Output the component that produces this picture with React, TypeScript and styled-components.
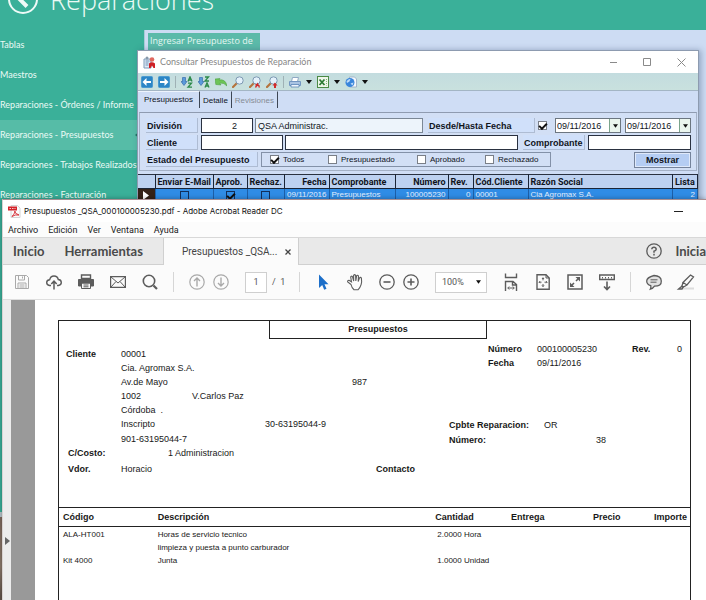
import React from "react";
import styled, { createGlobalStyle, css } from "styled-components";

const ui = `Lato, "Open Sans", sans-serif`;
const classic = `"Liberation Sans", Arial, sans-serif`;

const GlobalStyle = createGlobalStyle`
  * { box-sizing: border-box; }
  html, body, #root { height: 100%; }
  body { margin: 0; overflow: hidden; font-family: ${classic}; }
  button, input, select { font: inherit; color: inherit; margin: 0; padding: 0; border-radius: 0; }
  button { border: 0; background: none; }
  svg { display: block; }
`;

/* ---------- desktop ---------- */

const Desktop = styled.div`
  position: relative;
  display: flex;
  flex-direction: column;
  height: 100vh;
  overflow: hidden;
  background: #3ab099;
`;

const Shell = styled.div`
  flex: 1;
  min-height: 0;
  overflow: hidden;
  display: flex;
  flex-direction: column;
  background: #3ab099;
  color: #eafaf5;
  font-family: ${ui};
`;

const Backdrop = styled.div`
  flex: none;
  height: 88px;
  border-top: 5px solid #b9c6cc;
  background: linear-gradient(#7f6a5e, #8c7a6c 60%, #5f5148);
`;

const ShellHeader = styled.header`
  flex: none;
  display: flex;
  align-items: center;
  gap: 11px;
  height: 60px;
  margin-top: -30px;
  padding-left: 7px;
`;

const ShellTitle = styled.h1`
  margin: 0;
  font: 300 27px/36px "Open Sans", sans-serif;
`;

const ShellBody = styled.div`
  flex: 1;
  display: flex;
`;

const Nav = styled.nav`
  flex: none;
  width: 144px;
  display: flex;
  flex-direction: column;
`;

const NavLink = styled.a<{ $active?: boolean }>`
  display: flex;
  align-items: center;
  justify-content: space-between;
  height: 30px;
  color: #eafaf5;
  font-size: 9px;
  line-height: 12px;
  white-space: nowrap;
  text-decoration: none;
  background: ${(p) => (p.$active ? "#56bca7" : "transparent")};
`;

const NavMark = styled.svg`
  margin-right: 5px;
`;

const Content = styled.main`
  flex: 1;
  padding: 3px;
  border-left: 1px solid #a9cbd8;
  background: #cddcf3;
`;

const Tile = styled.button`
  width: 112px;
  height: 40px;
  padding: 1px 0 0 2px;
  background: #5bbaa9;
  color: #e6f7f3;
  font: 9px/13px "Open Sans", sans-serif;
  text-align: left;
  display: flex;
`;

/* ---------- query window ---------- */

const QueryWindow = styled.section`
  position: absolute;
  top: 50px;
  left: 137px;
  right: 7px;
  height: 160px;
  border: 1px solid #8d9bb0;
  background: #cfddf5;
  color: #10141c;
  font-size: 8px;
  box-shadow: 2px 0 6px rgba(40, 60, 100, 0.35);
  display: flex;
  flex-direction: column;
  overflow: hidden;
`;

const QueryTitleBar = styled.div`
  flex: none;
  display: flex;
  align-items: center;
  gap: 4px;
  height: 22px;
  padding-left: 5px;
  background: #fff;
  color: #868686;
  font: 9px/12px ${ui};
`;

const TitleText = styled.span`
  flex: 1;
  white-space: nowrap;
`;

const CaptionButtons = styled.div`
  display: flex;
`;

const CaptionButton = styled.button`
  width: 34px;
  height: 20px;
  display: grid;
  place-items: center;
  color: #8a8a8a;
`;

const QueryToolbar = styled.div`
  flex: none;
  display: flex;
  align-items: center;
  gap: 5px;
  height: 18px;
  padding-left: 3px;
  background: linear-gradient(#c3dcdf, #c9e1de);
  border-bottom: 1px solid #a3b5c4;
`;

const IconButton = styled.button`
  flex: none;
  display: grid;
  place-items: center;
`;

const QuerySeparator = styled.span`
  width: 1px;
  height: 12px;
  background: #9fb1b5;
`;

const QueryTabs = styled.div`
  flex: none;
  display: flex;
  align-items: stretch;
  height: 17px;
`;

const QueryTab = styled.button<{ $active?: boolean; $muted?: boolean }>`
  padding: ${(p) => (p.$active ? "0 6px" : "2px 3px 0 3px")};
  border-right: 1px solid #3d4654;
  color: ${(p) => (p.$muted ? "#868c94" : "#10141c")};
  font-size: 8px;
  line-height: 12px;
  border-top: 1px solid ${(p) => (p.$active ? "#eef4fd" : "#cfddf5")};
`;

const Filters = styled.form`
  flex: none;
  display: flex;
  flex-direction: column;
  gap: 2px;
  margin: 4px 1px 3px;
  padding: 5px 5px 3px 6px;
  border: 1px solid #a4b1c6;
  border-top-color: #8f9bb0;
  background: #d2dff5;
`;

const FilterRow = styled.div`
  display: flex;
  align-items: center;
  height: 15px;
`;

const FieldLabel = styled.label<{ $width: number; $before?: number }>`
  flex: none;
  width: ${(p) => p.$width}px;
  height: 15px;
  margin: 0 3px 0 ${(p) => p.$before ?? 0}px;
  padding: 2px 0 0 1px;
  border: solid #aebcd3;
  border-width: 0 1px 1px 0;
  background: #d0e0fa;
  font: bold 9px/12px ${classic};
  white-space: nowrap;
`;

const TextBox = styled.input<{ $width?: number; $readonly?: boolean; $before?: number }>`
  ${(p) => (p.$width ? css`flex: none; width: ${p.$width}px;` : css`flex: 1; width: 0; min-width: 0;`)}
  height: 15px;
  margin-left: ${(p) => p.$before ?? 0}px;
  padding: 0 2px;
  border: 1px solid ${(p) => (p.$readonly ? "#7b8795" : "#2a3140")};
  background: ${(p) => (p.$readonly ? "#edf4fb" : "#fff")};
  font-size: 9px;
`;

const NumberBox = styled(TextBox)`
  padding-right: 15px;
  text-align: right;
`;

const Check = styled.input.attrs({ type: "checkbox" })<{ $flat?: boolean; $after?: number }>`
  appearance: none;
  flex: none;
  display: grid;
  place-items: center;
  width: 9px;
  height: 9px;
  border: 1px solid ${(p) => (p.$flat ? "#12305c" : "#7a7f88")};
  background: ${(p) => (p.$flat ? "transparent" : "#fff")};
  && { margin-right: ${(p) => p.$after ?? 0}px; }
  &:checked::before {
    content: "";
    width: 6px;
    height: 3px;
    border: solid #111;
    border-width: 0 0 2px 2px;
    transform: rotate(-45deg);
  }
`;

const DateBox = styled.div`
  flex: none;
  display: flex;
  width: 66px;
  height: 15px;
  margin-left: 4px;
  border: 1px solid #6c7680;
  background: #fff;
`;

const DateInput = styled.input`
  flex: 1;
  width: 0;
  padding-left: 1px;
  border: 0;
  background: none;
  font-size: 9px;
`;

const DateDrop = styled.button`
  width: 11px;
  display: grid;
  place-items: center;
  border-left: 1px solid #7ba58c;
  background: #eaf5ee;
`;

const Spacer = styled.span`
  flex: 1;
`;

const StateGroup = styled.div`
  display: grid;
  grid-template-columns: 58px 89px 68px 58px;
  align-items: center;
  height: 15px;
  padding-left: 8px;
  width: 290px;
  border: 1px solid #8391a8;
`;

const StateOption = styled.label`
  display: flex;
  align-items: center;
  gap: 4px;
  font-size: 8px;
  white-space: nowrap;
`;

const ShowButton = styled.button`
  width: 57px;
  height: 16px;
  border: 1px solid #75839b;
  background: #b5cdf3;
  box-shadow: 0 0 0 1px #dfe9fa inset;
  font: bold 9px/12px ${classic};
`;

const Grid = styled.table`
  flex: none;
  width: 100%;
  table-layout: fixed;
  border-collapse: collapse;
  border-top: 1px solid #2a3140;
  white-space: nowrap;
`;

const GridHead = styled.th<{ $width?: number; $right?: boolean }>`
  width: ${(p) => (p.$width ? `${p.$width}px` : "auto")};
  height: 14px;
  padding: 0 2px;
  border-right: 1px solid #1a2436;
  border-bottom: 1px solid #1a2436;
  background: #bdd1f0;
  font: bold 9px/12px Roboto, sans-serif;
  text-align: ${(p) => (p.$right ? "right" : "left")};
  overflow: hidden;
`;

const GridCell = styled.td<{ $kind?: "mark" | "right" | "check" }>`
  height: 13px;
  padding: ${(p) => (p.$kind === "mark" ? "0 5px" : "0 2px")};
  border-right: 1px solid #1d5fa8;
  background: ${(p) => (p.$kind === "mark" ? "#352218" : "#2f8ce6")};
  color: #e3f0ff;
  font-size: 8px;
  line-height: 12px;
  text-align: ${(p) => (p.$kind === "right" ? "right" : "left")};
  overflow: hidden;
  ${(p) => p.$kind === "check" && css`&& > input { margin: 0 auto; }`}
`;

/* ---------- reader window ---------- */

const Reader = styled.section`
  position: absolute;
  top: 199px;
  left: 2px;
  right: 0;
  bottom: 0;
  display: flex;
  flex-direction: column;
  border-top: 1px solid #a88f92;
  border-left: 1px solid #d9d3d2;
  background: #fff;
  color: #222;
  box-shadow: 0 0 5px rgba(0, 0, 0, 0.35);
  overflow: hidden;
`;

const ReaderTitleBar = styled.div`
  flex: none;
  display: flex;
  align-items: center;
  gap: 3px;
  height: 22px;
  padding: 0 11px 0 5px;
  font: 8px/12px Inter, sans-serif;
  color: #111;
`;

const MenuBar = styled.nav`
  flex: none;
  display: flex;
  align-items: center;
  gap: 10px;
  height: 15px;
  padding-left: 5px;
  background: #fcfcfc;
`;

const MenuItem = styled.button`
  font: 9px/12px Roboto, sans-serif;
  color: #1a1a1a;
`;

const TabStrip = styled.div`
  flex: none;
  display: flex;
  align-items: stretch;
  height: 28px;
  border-top: 1px solid #d8d8d8;
  background: #e9e9e9;
  overflow: hidden;
`;

const HomeTabs = styled.div`
  flex: none;
  display: flex;
  gap: 20px;
  padding: 0 20px 0 10px;
  border-right: 1px solid #d0d0d0;
  border-bottom: 1px solid #d0d0d0;
`;

const HomeTab = styled.button`
  font: bold 13px/16px ${ui};
  color: #4a4a4a;
`;

const FileTab = styled.div`
  flex: none;
  display: flex;
  align-items: center;
  gap: 8px;
  padding: 0 7px 0 18px;
  border-right: 1px solid #cfcfcf;
  background: #fbfbfb;
  color: #444;
  font: 10px/14px Roboto, sans-serif;
`;

const TabRest = styled.div`
  flex: 1;
  display: flex;
  align-items: center;
  justify-content: flex-end;
  gap: 13px;
  border-bottom: 1px solid #d0d0d0;
`;

const ReaderToolbar = styled.div`
  flex: none;
  display: flex;
  align-items: center;
  gap: 16px;
  height: 35px;
  padding-left: 11px;
  border-bottom: 1px solid #dedede;
  background: #fbfbfb;
  overflow: hidden;
`;

const Pair = styled.div`
  flex: none;
  display: flex;
  gap: 8px;
`;

const ToolButton = styled.button<{ $light?: boolean }>`
  flex: none;
  width: 16px;
  height: 18px;
  display: grid;
  place-items: center;
  color: ${(p) => (p.$light ? "#a9a9a9" : "#5c5c5c")};
`;

const ToolSeparator = styled.span`
  flex: none;
  width: 1px;
  height: 20px;
  margin: 0 -1px;
  background: #d6d6d6;
`;

const Pager = styled.label`
  flex: none;
  display: flex;
  align-items: center;
  gap: 5px;
  width: 39px;
  color: #555;
  font: 9px/12px Roboto, sans-serif;
  white-space: nowrap;
`;

const PageInput = styled.input`
  width: 22px;
  height: 21px;
  border: 1px solid #cfcfcf;
  background: #fff;
  text-align: center;
`;

const ZoomBox = styled.div`
  flex: none;
  display: grid;
  align-items: center;
  width: 52px;
  height: 21px;
  border: 1px solid #cfcfcf;
  background: #fff;
  & > * { grid-area: 1 / 1; }
  & > svg { justify-self: end; margin-right: 5px; pointer-events: none; }
`;

const ZoomSelect = styled.select`
  appearance: none;
  width: 100%;
  height: 100%;
  padding-left: 6px;
  border: 0;
  background: none;
  color: #555;
  font: 9px/12px Roboto, sans-serif;
`;

const Viewer = styled.div`
  flex: 1;
  min-height: 0;
  display: flex;
`;

const PaneHandle = styled.button`
  flex: none;
  width: 8px;
  display: grid;
  padding-top: 237px;
  align-content: start;
  justify-content: center;
  background: #ececec;
`;

const Gutter = styled.div`
  flex: none;
  width: 24px;
  background: #999;
`;

const Page = styled.article`
  flex: 1;
  display: flex;
  padding: 20px 15px 0 23px;
  background: #fff;
  color: #181818;
  font: 9px/14px ${classic};
`;

const Frame = styled.div`
  flex: 1;
  border: 1px solid #222;
  border-bottom: 0;
`;

const DocTitle = styled.h2`
  width: 34.5%;
  height: 18px;
  margin: 0 0 0 33.3%;
  border: solid #222;
  border-width: 0 1px 1px;
  font: bold 9px/17px ${classic};
  text-align: center;
`;

const DocHead = styled.div`
  display: grid;
  grid-template-columns: 390fr 241fr;
  height: 169px;
  border-bottom: 1px solid #222;
  white-space: nowrap;
`;

const ClientBlock = styled.div`
  padding: 8px 0 0 7px;
`;

const ClientRow = styled.div<{ $gap?: number }>`
  display: grid;
  grid-template-columns:
    minmax(0, 55fr) minmax(0, 71fr) minmax(0, 73fr)
    minmax(0, 87fr) minmax(0, 24fr) minmax(0, 73fr);
  height: 14px;
  margin-top: ${(p) => p.$gap ?? 0}px;
`;

const Strong = styled.b<{ $indent?: number }>`
  padding-left: ${(p) => p.$indent ?? 0}px;
`;

const Value = styled.span<{ $col: number; $indent?: number }>`
  grid-column: ${(p) => p.$col};
  padding-left: ${(p) => p.$indent ?? 0}px;
`;

const NumberBlock = styled.div`
  padding-top: 3px;
`;

const NumberRow = styled.div`
  display: grid;
  grid-template-columns: 49fr 95fr 30fr 20fr;
  height: 14px;
  padding: 0 8px 0 39px;
`;

const VoucherRow = styled.div<{ $gap?: number }>`
  display: grid;
  grid-template-columns: 95fr 62fr 84fr;
  height: 15px;
  margin-top: ${(p) => p.$gap ?? 0}px;
`;

const RightValue = styled.span`
  text-align: right;
`;

const Items = styled.table`
  width: 100%;
  table-layout: fixed;
  border-collapse: collapse;
`;

const ItemHead = styled.th<{ $width?: number; $right?: boolean }>`
  width: ${(p) => (p.$width ? `${p.$width}%` : "auto")};
  height: 18px;
  padding: ${(p) => (p.$right ? "0 3px" : "0 4px")};
  border-bottom: 1px solid #222;
  font: bold 9px/14px ${classic};
  text-align: ${(p) => (p.$right ? "right" : "left")};
`;

const ItemCell = styled.td<{ $indent?: boolean }>`
  height: 13px;
  padding: 0 0 0 ${(p) => (p.$indent ? 6 : 4)}px;
  font-size: 8px;
  line-height: 13px;
  white-space: nowrap;
`;

const ItemsBody = styled.tbody`
  &::before {
    content: "";
    display: table-row;
    height: 2px;
  }
`;

/* ---------- icons ---------- */

const BackArrow = () => (
  <svg width="32" height="32" viewBox="0 0 32 32" fill="none" stroke="#eefaf7">
    <circle cx="16" cy="15" r="14" strokeWidth="2" />
    <path d="M19.500 8 12.500 15l7.500 7.500" strokeWidth="4" />
    <path d="M12.500 15H24" strokeWidth="2" />
  </svg>
);

const Caret = ({ size = 6 }: { size?: number }) => (
  <svg width={size} height="4" viewBox="0 0 6 4"><path d="M0 0h6L3 4z" fill="#111" /></svg>
);

const QueryAppIcon = () => (
  <svg width="13" height="13" viewBox="0 0 13 13">
    <path d="M1 3h7v9H1z" fill="#dfeaf5" stroke="#7c9ab8" />
    <path d="M2.500 5h4M2.500 7h3M2.500 9h3" stroke="#6d92b9" />
    <circle cx="4" cy="2" r="1.500" fill="#89a" />
    <circle cx="9" cy="3.500" r="2.300" fill="#e0675e" />
    <path d="M6 12V7.500Q9 5 12 7.500V12H10.500L9 9.500 7.500 12z" fill="#cf1f25" />
  </svg>
);

const BlueArrow = ({ right }: { right?: boolean }) => (
  <svg width="12" height="12" viewBox="0 0 12 12">
    <rect x=".5" y=".5" width="11" height="11" rx="1" fill="#2b86c6" stroke="#4a9ad0" />
    <path d={right ? "M10.500 6 6.500 2V5H2v2h4.500v3z" : "M1.500 6l4-4V5H10v2H5.500v3z"} fill="#fff" />
  </svg>
);

const SortIcon = ({ reverse }: { reverse?: boolean }) => (
  <svg width="12" height="12" viewBox="0 0 12 12" fill="none">
    <path d="M1.500 1.500h3v4H6L3 9.500 0 5.500h1.500z" fill="#5b9adb" stroke="#2b62a5" strokeWidth=".6" />
    <path d={reverse ? "M7 1h3.500L7 5h4" : "M7 5.500 9 .8l2 4.700M7.700 4h2.600"} stroke="#2d8a4a" strokeWidth="1.300" />
    <path d={reverse ? "M7 11.500 9 6.800l2 4.700M7.700 10h2.600" : "M7 7.200h3.500L7 11.200h4"} stroke="#2d8a4a" strokeWidth="1.300" />
  </svg>
);

const UndoIcon = () => (
  <svg width="12" height="12" viewBox="0 0 12 12">
    <path d="M0 3 5 2.500 4 4q6.500-1.500 8 6Q9 6.500 4.800 7.200L6 9 .8 8.500z" fill="#6cc455" stroke="#459b38" strokeWidth=".5" />
  </svg>
);

const LensIcon = ({ mark }: { mark?: "cross" | "arrow" }) => (
  <svg width="12" height="12" viewBox="0 0 12 12">
    <path d="M1 11 5 7" stroke="#b5733c" strokeWidth="2.200" strokeLinecap="round" />
    <circle cx="7.500" cy="4.500" r="3.700" fill="#e3f1fb" stroke="#7d98b2" />
    {mark === "cross" && <path d="M6.500 11.500 8.500 8l2 3.500M6.500 8.500l4 1.500" stroke="#d12a2a" strokeWidth="1.500" fill="none" />}
    {mark === "arrow" && <path d="M8 12V9.500H6.500L9 6.500l2.500 3H10V12z" fill="#d12a2a" />}
  </svg>
);

const PrintColor = () => (
  <svg width="12" height="12" viewBox="0 0 12 12">
    <path d="M3.500 1.500h6l-1 4h-6z" fill="#fff" stroke="#8fa8c4" />
    <path d="M.5 5.500h11v4H.500z" fill="#a9c3e2" stroke="#7396c2" />
    <path d="M2 8.500h8v2.500H2z" fill="#eef4fb" stroke="#4a78b0" strokeWidth=".7" />
  </svg>
);

const ExcelIcon = () => (
  <svg width="12" height="12" viewBox="0 0 12 12">
    <rect x=".5" y=".5" width="11" height="11" fill="#eef6ea" stroke="#4b8a45" />
    <path d="M2.500 3.500 7.500 9M7.500 3.500l-5 5.500" stroke="#2c7a33" strokeWidth="1.800" />
    <path d="M9.500 3v6.500" stroke="#7fb573" strokeDasharray="1 1" />
  </svg>
);

const GlobeIcon = () => (
  <svg width="12" height="12" viewBox="0 0 12 12">
    <path d="M4.500 1h5l2 2v8h-7z" fill="#f5f8fc" stroke="#94a9c2" strokeWidth=".8" />
    <circle cx="5" cy="6.500" r="4.500" fill="#3a86dc" />
    <path d="M1.500 5.500q1.500-3 4-2.500L4.500 5.500 2 7z" fill="#bfdcf8" />
    <path d="M5.500 7.500l3-1-1 3z" fill="#bfdcf8" />
  </svg>
);

const PdfIcon = () => (
  <svg width="13" height="13" viewBox="0 0 13 13">
    <path d="M3 .500h6.500L12 3v9.500H3z" fill="#fbfbfb" stroke="#d4d4d4" />
    <path d="M0 1.500h9v4H0z" fill="#d3232a" />
    <path d="M1.500 3.500h6" stroke="#f6c9c9" strokeDasharray="1.500 1" />
    <path d="M4 11.500Q7.500 7.500 6.800 6q-.5 2.500 4.200 4-4-.7-7 1.500z" fill="none" stroke="#d3232a" strokeWidth=".9" />
  </svg>
);

type ToolName = "save" | "cloud" | "print" | "mail" | "find" | "up" | "down" | "cursor" | "hand" | "minus" | "plus"
  | "fitWidth" | "fitPage" | "full" | "ruler" | "comment" | "pen" | "help";

const drawings: Record<ToolName, React.ReactNode> = {
  save: <><path d="M1.500 1.500h11l2 2v11h-13z" /><path d="M4.500 1.500v4.500h6V1.500M8.500 2.500v2M4 14.500V9h8v5.500M5.500 11h5M5.500 13h5" /></>,
  cloud: <><path d="M5 11.500H3.500Q.7 11 .7 8.500T3.700 5.700Q4.500 2 8 2t4.300 3.500q3 .3 3 3t-3 3H11" strokeWidth="1.400" /><path d="M8 15.500V7.500M5.300 10 8 7.200l2.700 2.800" strokeWidth="1.500" /></>,
  print: <><path d="M3.500 1h9v3.500h-9z" strokeWidth="1.400" /><path d="M.5 5.500h15V12H13V9H3v3H.500z" fill="currentColor" /><path d="M3.500 9h9v5.500h-9zM5.500 11h5M5.500 12.800h5" /></>,
  mail: <><path d="M.6 2.600h14.800v10.800H.600z" strokeWidth="1.200" /><path d="M1 3l7 6 7-6M1 13l5-5.500M15 13l-5-5.500" /></>,
  find: <><circle cx="7" cy="7" r="5.700" strokeWidth="1.600" /><path d="m11.500 11.500 3.500 3.500" strokeWidth="2.200" /></>,
  up: <><circle cx="8" cy="8" r="7.200" strokeWidth="1.200" /><path d="M8 12.500V4M5 7l3-3 3 3" strokeWidth="1.400" /></>,
  down: <><circle cx="8" cy="8" r="7.200" strokeWidth="1.200" /><path d="M8 3.500V12M5 9l3 3 3-3" strokeWidth="1.400" /></>,
  cursor: <path d="M4 .500v13.500l3.200-3 2 4.700 2.300-1-2-4.500h4z" fill="#1d6fc9" stroke="none" />,
  hand: <path d="M4 10.500.7 8Q.2 6.300 2 6.300l2.500 1.500L3.700 3q.5-1.500 1.800-.3L6.700 7 6.600 1.300q1-1.300 2 0L8.800 7l.8-5.200q1-1.200 1.900.2L11.200 7.500l1.300-3.700q1.200-1 1.900.4.6 3.500-.3 6.500T11 15.800H7Q4.800 14 4 10.500z" strokeWidth="1.100" />,
  minus: <><circle cx="8" cy="8" r="7.200" strokeWidth="1.300" /><path d="M4.500 8h7" strokeWidth="1.600" /></>,
  plus: <><circle cx="8" cy="8" r="7.200" strokeWidth="1.300" /><path d="M4.500 8h7M8 4.500v7" strokeWidth="1.600" /></>,
  fitWidth: <><path d="M2.500-.5v4h11v-4M2.500 17v-9.500H10l3.500 3V17M9.500 7.500v3.500h4" strokeWidth="1.400" /><path d="M5 14h6M6.200 12.500 4.700 14l1.500 1.500M9.800 12.500l1.500 1.500-1.500 1.500" /></>,
  fitPage: <><path d="M2 .800h9L14.200 4v11.200H2z" strokeWidth="1.400" /><path d="M11 .800V4h3.200M8 3.800v2.500M8 10v2.500M4 8.200h2.500M9.500 8.200H12M7 5l1-1.200L9 5M7 11.400l1 1.200 1-1.200M5 7.200l-1 1 1 1M11.200 7.200l1 1-1 1" /></>,
  full: <><path d="M1 1h14v14H1z" strokeWidth="1.500" /><path d="M8.500 3H13v4.500zM3 8.500V13h4.500z" fill="currentColor" stroke="none" /><path d="m7 9-2 2M9 7l2-2" strokeWidth="1.600" /></>,
  ruler: <><path d="M.7 1h14.600v4.500H.700z" strokeWidth="1.400" /><path d="M3.500 3v1.500M6.500 3v1.500M9.500 3v1.500M12.500 3v1.500" /><path d="M8 7.500v8M5 12.500l3 3 3-3" strokeWidth="1.600" /></>,
  comment: <><path d="M8 1.500q7 .3 7.300 5.500T8.500 12.200q-1.500 2.300-4.200 3 .8-1.500.5-3.500Q.7 10.500.7 7T8 1.500z" fill="#e2e2e2" strokeWidth="1.300" /><path d="M4.500 5.800h7M4.500 8.200h6" /></>,
  pen: <><path d="M7 13.500h9v2H4z" fill="#dcdcdc" stroke="none" /><path d="M12.500 1 15.500 3 9 11l-4-2.500zM5 8.500 4 12l1.500 1L9 11M3.500 12.500.5 15h3.500l1.500-2z" strokeWidth="1.300" /></>,
  help: <><circle cx="8" cy="8" r="7.200" strokeWidth="1.300" /><path d="M5.800 6.300Q6 4.300 8 4.300t2.200 1.900Q10.200 7.500 8 8.300v1.400M8 10.800v1.600" strokeWidth="1.500" /></>,
};

const Tool = ({ name, label, light }: { name: ToolName; label: string; light?: boolean }) => (
  <ToolButton aria-label={label} $light={light}>
    <svg width="16" height="16" viewBox="0 0 16 16" fill="none" stroke="currentColor" overflow="visible">
      {drawings[name]}
    </svg>
  </ToolButton>
);

/* ---------- parts ---------- */

const navItems = [
  "Tablas",
  "Maestros",
  "Reparaciones - Órdenes / Informe",
  "Reparaciones - Presupuestos",
  "Reparaciones - Trabajos Realizados",
  "Reparaciones - Facturación",
];

const DateField = ({ label }: { label: string }) => (
  <DateBox>
    <DateInput aria-label={label} defaultValue="09/11/2016" />
    <DateDrop type="button" aria-label={`Abrir calendario ${label}`}><Caret size={5} /></DateDrop>
  </DateBox>
);

const Query = () => (
  <QueryWindow>
    <QueryTitleBar>
      <QueryAppIcon />
      <TitleText>Consultar Presupuestos de Reparación</TitleText>
      <CaptionButtons>
        <CaptionButton aria-label="Minimizar"><svg width="9" height="9" viewBox="0 0 9 9" stroke="currentColor"><path d="M1 4.500h7" /></svg></CaptionButton>
        <CaptionButton aria-label="Maximizar"><svg width="9" height="9" viewBox="0 0 9 9" fill="none" stroke="currentColor"><path d="M.5.500h7v7h-7z" /></svg></CaptionButton>
        <CaptionButton aria-label="Cerrar"><svg width="9" height="9" viewBox="0 0 9 9" stroke="currentColor"><path d="m.5.500 8 8m0-8-8 8" /></svg></CaptionButton>
      </CaptionButtons>
    </QueryTitleBar>
    <QueryToolbar>
      <IconButton aria-label="Anterior"><BlueArrow /></IconButton>
      <IconButton aria-label="Siguiente"><BlueArrow right /></IconButton>
      <QuerySeparator />
      <IconButton aria-label="Orden ascendente"><SortIcon /></IconButton>
      <IconButton aria-label="Orden descendente"><SortIcon reverse /></IconButton>
      <IconButton aria-label="Deshacer"><UndoIcon /></IconButton>
      <IconButton aria-label="Buscar"><LensIcon /></IconButton>
      <IconButton aria-label="Quitar búsqueda"><LensIcon mark="cross" /></IconButton>
      <IconButton aria-label="Buscar siguiente"><LensIcon mark="arrow" /></IconButton>
      <QuerySeparator />
      <IconButton aria-label="Imprimir"><PrintColor /></IconButton>
      <IconButton aria-label="Opciones de impresión"><Caret /></IconButton>
      <IconButton aria-label="Excel"><ExcelIcon /></IconButton>
      <IconButton aria-label="Opciones de Excel"><Caret /></IconButton>
      <IconButton aria-label="Web"><GlobeIcon /></IconButton>
      <IconButton aria-label="Opciones web"><Caret /></IconButton>
    </QueryToolbar>
    <QueryTabs>
      <QueryTab $active>Presupuestos</QueryTab>
      <QueryTab>Detalle</QueryTab>
      <QueryTab $muted>Revisiones</QueryTab>
    </QueryTabs>
    <Filters onSubmit={(e) => e.preventDefault()}>
      <FilterRow>
        <FieldLabel $width={52} htmlFor="division">División</FieldLabel>
        <NumberBox id="division" $width={52} defaultValue="2" />
        <TextBox aria-label="Nombre de división" $readonly $before={2} readOnly defaultValue="QSA Administrac." />
        <FieldLabel $width={107} $before={5} htmlFor="useDates">Desde/Hasta Fecha</FieldLabel>
        <Check id="useDates" $after={4} defaultChecked />
        <DateField label="Desde" />
        <DateField label="Hasta" />
      </FilterRow>
      <FilterRow>
        <FieldLabel $width={52} htmlFor="cliente">Cliente</FieldLabel>
        <TextBox id="cliente" $width={82} />
        <TextBox aria-label="Nombre de cliente" $before={2} />
        <FieldLabel $width={62} $before={5} htmlFor="comprobante">Comprobante</FieldLabel>
        <TextBox id="comprobante" $width={103} />
      </FilterRow>
      <FilterRow>
        <FieldLabel as="span" $width={112}>Estado del Presupuesto</FieldLabel>
        <StateGroup role="group" aria-label="Estado del Presupuesto">
          <StateOption><Check defaultChecked />Todos</StateOption>
          <StateOption><Check />Presupuestado</StateOption>
          <StateOption><Check />Aprobado</StateOption>
          <StateOption><Check />Rechazado</StateOption>
        </StateGroup>
        <Spacer />
        <ShowButton type="submit">Mostrar</ShowButton>
      </FilterRow>
    </Filters>
    <Grid>
      <thead>
        <tr>
          <GridHead $width={17} />
          <GridHead $width={58}>Enviar E-Mail</GridHead>
          <GridHead $width={34}>Aprob.</GridHead>
          <GridHead $width={37}>Rechaz.</GridHead>
          <GridHead $width={45} $right>Fecha</GridHead>
          <GridHead $width={66}>Comprobante</GridHead>
          <GridHead $width={53} $right>Número</GridHead>
          <GridHead $width={25}>Rev.</GridHead>
          <GridHead $width={55}>Cód.Cliente</GridHead>
          <GridHead>Razón Social</GridHead>
          <GridHead $width={25}>Lista</GridHead>
        </tr>
      </thead>
      <tbody>
        <tr>
          <GridCell $kind="mark"><svg width="6" height="9" viewBox="0 0 6 9"><path d="M0 0l6 4.500L0 9z" fill="#fff" /></svg></GridCell>
          <GridCell $kind="check"><Check $flat aria-label="Enviar E-Mail" /></GridCell>
          <GridCell $kind="check"><Check $flat defaultChecked aria-label="Aprobado" /></GridCell>
          <GridCell $kind="check"><Check $flat aria-label="Rechazado" /></GridCell>
          <GridCell $kind="right">09/11/2016</GridCell>
          <GridCell>Presupuestos</GridCell>
          <GridCell $kind="right">100005230</GridCell>
          <GridCell $kind="right">0</GridCell>
          <GridCell>00001</GridCell>
          <GridCell>Cia Agromax S.A.</GridCell>
          <GridCell $kind="right">2</GridCell>
        </tr>
      </tbody>
    </Grid>
  </QueryWindow>
);

const Invoice = () => (
  <Page>
    <Frame>
      <DocTitle>Presupuestos</DocTitle>
      <DocHead>
        <ClientBlock>
          <ClientRow><Strong>Cliente</Strong><Value $col={2}>00001</Value></ClientRow>
          <ClientRow><Value $col={2}>Cia. Agromax S.A.</Value></ClientRow>
          <ClientRow><Value $col={2}>Av.de Mayo</Value><Value $col={5}>987</Value></ClientRow>
          <ClientRow><Value $col={2}>1002</Value><Value $col={3}>V.Carlos Paz</Value></ClientRow>
          <ClientRow><Value $col={2}>Córdoba &nbsp;.</Value></ClientRow>
          <ClientRow><Value $col={2}>Inscripto</Value><Value $col={4}>30-63195044-9</Value></ClientRow>
          <ClientRow $gap={1}><Value $col={2}>901-63195044-7</Value></ClientRow>
          <ClientRow><Strong $indent={2}>C/Costo:</Strong><Value $col={2} $indent={47}>1 Administracion</Value></ClientRow>
          <ClientRow $gap={2}>
            <Strong $indent={2}>Vdor.</Strong>
            <Value $col={2}>Horacio</Value>
            <Value as="b" $col={6}>Contacto</Value>
          </ClientRow>
        </ClientBlock>
        <NumberBlock>
          <NumberRow><Strong>Número</Strong><span>000100005230</span><Strong>Rev.</Strong><RightValue>0</RightValue></NumberRow>
          <NumberRow><Strong>Fecha</Strong><span>09/11/2016</span></NumberRow>
          <VoucherRow $gap={48}><Strong>Cpbte Reparacion:</Strong><span>OR</span></VoucherRow>
          <VoucherRow><Strong>Número:</Strong><RightValue>38</RightValue></VoucherRow>
        </NumberBlock>
      </DocHead>
      <Items>
        <thead>
          <tr>
            <ItemHead $width={15}>Código</ItemHead>
            <ItemHead $width={44}>Descripción</ItemHead>
            <ItemHead $width={12}>Cantidad</ItemHead>
            <ItemHead $width={13}>Entrega</ItemHead>
            <ItemHead $width={8}>Precio</ItemHead>
            <ItemHead $right>Importe</ItemHead>
          </tr>
        </thead>
        <ItemsBody>
          <tr><ItemCell>ALA-HT001</ItemCell><ItemCell>Horas de servicio tecnico</ItemCell><ItemCell $indent>2.0000 Hora</ItemCell></tr>
          <tr><ItemCell /><ItemCell>limpieza y puesta a punto carburador</ItemCell></tr>
          <tr><ItemCell>Kit 4000</ItemCell><ItemCell>Junta</ItemCell><ItemCell $indent>1.0000 Unidad</ItemCell></tr>
        </ItemsBody>
      </Items>
    </Frame>
  </Page>
);

const Acrobat = () => (
  <Reader>
    <ReaderTitleBar>
      <PdfIcon />
      <TitleText>Presupuestos _QSA_000100005230.pdf - Adobe Acrobat Reader DC</TitleText>
      <CaptionButton aria-label="Minimizar"><svg width="9" height="9" viewBox="0 0 9 9" stroke="#222"><path d="M0 4.500h9" /></svg></CaptionButton>
    </ReaderTitleBar>
    <MenuBar>
      {["Archivo", "Edición", "Ver", "Ventana", "Ayuda"].map((m) => <MenuItem key={m}>{m}</MenuItem>)}
    </MenuBar>
    <TabStrip>
      <HomeTabs><HomeTab>Inicio</HomeTab><HomeTab>Herramientas</HomeTab></HomeTabs>
      <FileTab>
        Presupuestos _QSA...
        <IconButton aria-label="Cerrar pestaña"><svg width="6" height="6" viewBox="0 0 6 6" stroke="#444" strokeWidth="1.300"><path d="m.5.500 5 5m0-5-5 5" /></svg></IconButton>
      </FileTab>
      <TabRest><Tool name="help" label="Ayuda" /><HomeTab>Inicia</HomeTab></TabRest>
    </TabStrip>
    <ReaderToolbar>
      <Tool name="save" label="Guardar" light />
      <Tool name="cloud" label="Subir" />
      <Tool name="print" label="Imprimir" />
      <Tool name="mail" label="Enviar" />
      <Tool name="find" label="Buscar" />
      <ToolSeparator />
      <Pair><Tool name="up" label="Página anterior" light /><Tool name="down" label="Página siguiente" light /></Pair>
      <Pager><PageInput aria-label="Página" defaultValue="1" />/ &nbsp;1</Pager>
      <ToolSeparator />
      <Tool name="cursor" label="Seleccionar" />
      <Tool name="hand" label="Mano" />
      <Pair><Tool name="minus" label="Reducir" /><Tool name="plus" label="Ampliar" /></Pair>
      <ZoomBox>
        <ZoomSelect aria-label="Zoom" defaultValue="100%"><option>100%</option></ZoomSelect>
        <Caret size={5} />
      </ZoomBox>
      <Tool name="fitWidth" label="Ajustar ancho" />
      <Tool name="fitPage" label="Ajustar página" />
      <Tool name="full" label="Pantalla completa" />
      <Tool name="ruler" label="Barra de herramientas" />
      <ToolSeparator />
      <Tool name="comment" label="Comentar" />
      <Tool name="pen" label="Resaltar" />
    </ReaderToolbar>
    <Viewer>
      <PaneHandle aria-label="Mostrar panel"><svg width="5" height="8" viewBox="0 0 5 8"><path d="M0 0l5 4-5 4z" fill="#666" /></svg></PaneHandle>
      <Gutter />
      <Invoice />
    </Viewer>
  </Reader>
);

export default function App() {
  return (
    <Desktop>
      <GlobalStyle />
      <Shell>
        <ShellHeader><BackArrow /><ShellTitle>Reparaciones</ShellTitle></ShellHeader>
        <ShellBody>
          <Nav>
            {navItems.map((item, i) => (
              <NavLink key={item} href="#" $active={i === 3}>
                {item}
                {i === 3 && <NavMark width="4" height="6" viewBox="0 0 4 6"><path d="M4 0v6L0 3z" fill="#1f6f60" /></NavMark>}
              </NavLink>
            ))}
          </Nav>
          <Content><Tile>Ingresar Presupuesto de</Tile></Content>
        </ShellBody>
      </Shell>
      <Backdrop />
      <Query />
      <Acrobat />
    </Desktop>
  );
}
